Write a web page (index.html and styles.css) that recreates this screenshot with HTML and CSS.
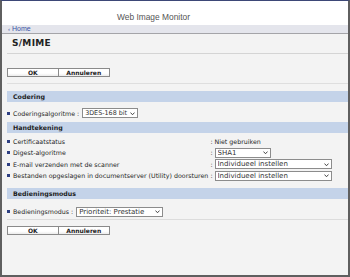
FILE: index.html
```html
<!DOCTYPE html>
<html lang="nl">
<head>
  <meta charset="utf-8" />
  <title>Web Image Monitor - S/MIME</title>
  <link rel="stylesheet" href="styles.css">
</head>
<body>
  <div class="page">
    <!-- kop -->
    <div class="header"><span class="brand">Web Image Monitor</span></div>
    <div class="crumb"><span class="crumb-arrow">&lsaquo;</span> <a href="#">Home</a></div>

    <div class="main">
      <div class="title">S/MIME</div>

      <div class="btnbar">
        <button class="btn">OK</button><button class="btn">Annuleren</button>
      </div>

      <!-- Codering -->
      <div class="sec-head">Codering</div>
      <div class="sec-body sec-enc">
        <div class="grid inline">
          <div class="lbl"><i class="dot"></i>Coderingsalgoritme :</div>
          <div class="val">
            <span class="sel w-enc"><select class="tight"><option>3DES-168 bit</option></select><svg viewBox="0 0 6 4"><path d="M0.6 0.6 L3 3.2 L5.4 0.6"/></svg></span>
          </div>
        </div>
      </div>

      <!-- Handtekening -->
      <div class="sec-head">Handtekening</div>
      <div class="sec-body sec-sign">
        <div class="grid">
          <div class="lbl"><i class="dot"></i>Certificaatstatus</div>
          <div class="val">: Niet gebruiken</div>

          <div class="lbl"><i class="dot"></i>Digest-algoritme</div>
          <div class="val">: <span class="sel w56"><select><option>SHA1</option></select><svg viewBox="0 0 6 4"><path d="M0.6 0.6 L3 3.2 L5.4 0.6"/></svg></span></div>

          <div class="lbl"><i class="dot"></i>E-mail verzenden met de scanner</div>
          <div class="val">: <span class="sel w117"><select><option>Individueel instellen</option></select><svg viewBox="0 0 6 4"><path d="M0.6 0.6 L3 3.2 L5.4 0.6"/></svg></span></div>

          <div class="lbl"><i class="dot"></i>Bestanden opgeslagen in documentserver (Utility) doorsturen</div>
          <div class="val">: <span class="sel w117"><select><option>Individueel instellen</option></select><svg viewBox="0 0 6 4"><path d="M0.6 0.6 L3 3.2 L5.4 0.6"/></svg></span></div>
        </div>
      </div>

      <!-- Bedieningsmodus -->
      <div class="sec-head">Bedieningsmodus</div>
      <div class="sec-body sec-mode">
        <div class="grid inline">
          <div class="lbl"><i class="dot"></i>Bedieningsmodus :</div>
          <div class="val">
            <span class="sel w87"><select><option>Prioriteit: Prestatie</option></select><svg viewBox="0 0 6 4"><path d="M0.6 0.6 L3 3.2 L5.4 0.6"/></svg></span>
          </div>
        </div>
      </div>

      <div class="btnbar bottom">
        <button class="btn">OK</button><button class="btn">Annuleren</button>
      </div>
    </div>
  </div>
</body>
</html>
```

FILE: styles.css
```css
html,body{margin:0;height:100%;background:#f3f3f3;font-family:"DejaVu Sans",Verdana,sans-serif;color:#222}
.page{height:277px;box-sizing:border-box;border:2px solid #5f5f5f;border-top:1px solid #3d4877;display:flex;flex-direction:column;overflow:hidden}

.header{height:24px;box-sizing:border-box;padding:4px 0 0 115px;background:#fff}
.brand{font-family:"Liberation Sans",Arial,sans-serif;font-size:8.4px;line-height:20px;color:#555}

.crumb{height:8px;background:#e4e5ec;border-bottom:1px solid #a4a4a8;padding-left:6px;font-family:"Liberation Sans",Arial,sans-serif;font-size:7px;line-height:8px}
.crumb a{color:#3a52a4;text-decoration:none}
.crumb-arrow{color:#3a52a4;font-size:6px}

.main{flex:1;padding-left:5px;background:#f3f3f3}
.title{height:19px;line-height:19px;padding-left:5px;border-bottom:1px solid #d4d4d4;font-size:9px;font-weight:bold;letter-spacing:.3px;color:#222}

.btnbar{margin-top:14px;padding-bottom:6px;border-bottom:1px solid #dedede;display:flex}
.btnbar.bottom{margin-top:6px;border-bottom:0}
.btn{width:51.5px;height:9px;padding:0;margin:0;border:1px solid #8a8a8a;background:linear-gradient(#fff,#fff 60%,#ebebeb);font-family:"DejaVu Sans",Verdana,sans-serif;font-size:6px;font-weight:bold;line-height:7px;color:#222;box-sizing:border-box}
.btn + .btn{border-left:0}

.sec-head{height:11px;line-height:11px;margin-top:7px;padding-left:6px;background:#c4d3e9;font-size:6.3px;font-weight:bold;color:#1d1d1d}
.sec-body + .sec-head{margin-top:0}
.sec-enc{padding:5px 0 3px}
.sec-sign{padding:2.5px 0 6px}
.sec-mode{padding:7px 0 1.5px;border-bottom:1px solid #dcdcdc}

.grid{display:grid;grid-template-columns:max-content 1fr;grid-auto-rows:11.5px;align-items:center;font-size:6.3px;color:#1e1e1e}
.grid.inline{grid-template-columns:max-content max-content;grid-auto-rows:12px}
.lbl{display:flex;align-items:center;white-space:nowrap}
.dot{display:inline-block;width:3px;height:3px;background:#2d3f82;margin-right:3px}
.val{white-space:nowrap;padding-left:2px;display:flex;align-items:center;gap:2px}
.inline .val{padding-left:3px}

.sel{position:relative;display:inline-block;height:10px}
.sel select{appearance:none;-webkit-appearance:none;height:10px;width:100%;box-sizing:border-box;margin:0;padding:0 8px 0 2px;border:1px solid #8c8c8c;border-radius:0;background:#fff;font-family:"DejaVu Sans",Verdana,sans-serif;font-size:7px;line-height:8px;color:#333}
.sel select.tight{font-size:6.4px;padding-right:7px}
.sel svg{position:absolute;right:3px;top:3.5px;width:5px;height:3.5px;fill:none;stroke:#333;stroke-width:1.1;pointer-events:none}
.w-enc{width:56px}
.w56{width:56px}
.w87{width:87px}
.w117{width:117px}
```
